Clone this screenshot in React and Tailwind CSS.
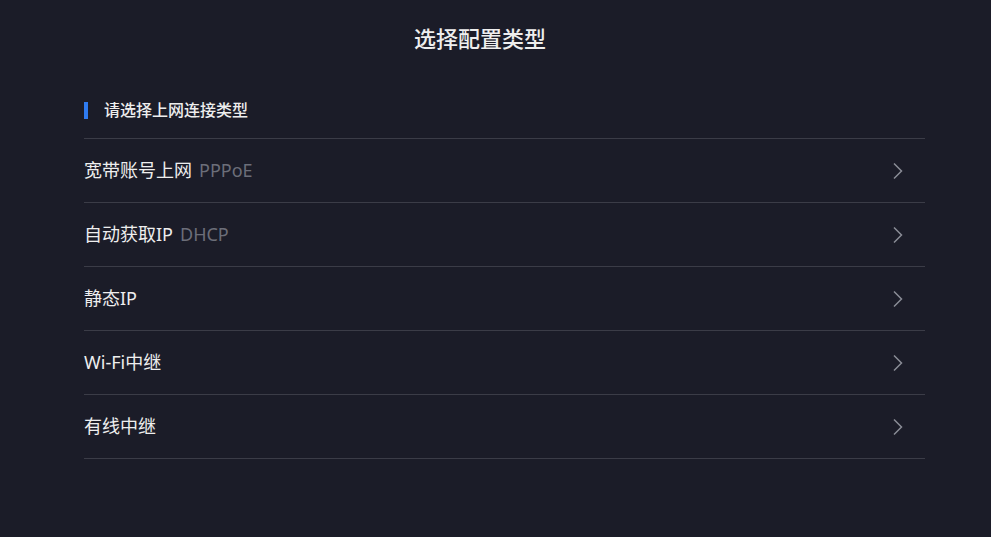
import React from 'react';

const options = [
  { label: "宽带账号上网", sub: "PPPoE" },
  { label: "自动获取IP", sub: "DHCP" },
  { label: "静态IP" },
  { label: "Wi-Fi中继" },
  { label: "有线中继" },
];

const Chevron = () => (
  <svg width="12" height="18" viewBox="0 0 12 18" fill="none" className="text-[#8a8c96]">
    <path d="M2 1.5 L9.5 9 L2 16.5" stroke="currentColor" strokeWidth="1.5" />
  </svg>
);

const App = () => {
  return (
    <div
      className="w-full h-[537px] bg-[#1b1c28] text-[#eeeeee]"
      style={{ fontFamily: '"Noto Sans", "Noto Sans CJK SC", sans-serif' }}
    >
      <div className="pt-[22px] text-center pr-[31px]">
        <h1 className="text-[22px] leading-[32px] font-medium">选择配置类型</h1>
      </div>

      <div className="ml-[84px] w-[841px] mt-[46px]">
        <div className="flex items-center h-[20px] mb-[18px]">
          <span className="w-[4px] h-[17px] bg-[#2f7bf0]" />
          <span className="ml-[16px] text-[16px] font-medium">请选择上网连接类型</span>
        </div>

        <div className="border-t border-[#3b3c47]">
          {options.map((opt, i) => (
            <div
              key={i}
              className="flex items-center justify-between h-[64px] border-b border-[#3b3c47]"
            >
              <div className="text-[18px]">
                {opt.label}
                {opt.sub && <span className="ml-[7px] text-[#6c6e79]">{opt.sub}</span>}
              </div>
              <div className="mr-[21px]">
                <Chevron />
              </div>
            </div>
          ))}
        </div>
      </div>
    </div>
  );
};

export default App;
